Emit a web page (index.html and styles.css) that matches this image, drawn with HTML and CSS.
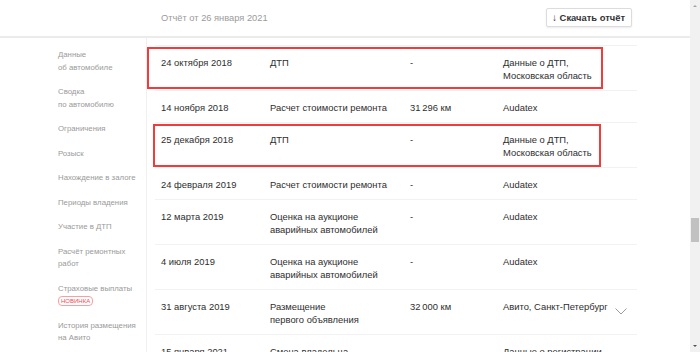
FILE: index.html
```html
<!DOCTYPE html>
<html lang="ru">
<head>
  <meta charset="UTF-8" />
  <title>Отчёт</title>
  <link rel="stylesheet" href="styles.css">
</head>
<body>
  <div class="page">
    <div class="header">
      <div class="report-date">Отчёт от 26 января 2021</div>
      <button class="download"><span class="arr">&#8595;</span> Скачать отчёт</button>
    </div>
    <div class="content">
      <div class="sidebar">
        <div class="nav-item">Данные<br />об автомобиле</div>
        <div class="nav-item">Сводка<br />по автомобилю</div>
        <div class="nav-item">Ограничения</div>
        <div class="nav-item">Розыск</div>
        <div class="nav-item">Нахождение в залоге</div>
        <div class="nav-item">Периоды владения</div>
        <div class="nav-item">Участие в ДТП</div>
        <div class="nav-item">Расчёт ремонтных<br />работ</div>
        <div class="nav-item">Страховые выплаты<br /><span class="badge">НОВИНКА</span></div>
        <div class="nav-item">История размещения<br />на Авито</div>
      </div>
      <div class="history">
        <div class="row">
          <div class="c-date">24 октября 2018</div>
          <div class="c-type">ДТП</div>
          <div class="c-km">-</div>
          <div class="c-src">Данные о ДТП,<br />Московская область</div>
          <div class="c-more"></div>
        </div>
        <div class="row">
          <div class="c-date">14 ноября 2018</div>
          <div class="c-type">Расчет стоимости ремонта</div>
          <div class="c-km">31&#8201;296 км</div>
          <div class="c-src">Audatex</div>
          <div class="c-more"></div>
        </div>
        <div class="row">
          <div class="c-date">25 декабря 2018</div>
          <div class="c-type">ДТП</div>
          <div class="c-km">-</div>
          <div class="c-src">Данные о ДТП,<br />Московская область</div>
          <div class="c-more"></div>
        </div>
        <div class="row">
          <div class="c-date">24 февраля 2019</div>
          <div class="c-type">Расчет стоимости ремонта</div>
          <div class="c-km">-</div>
          <div class="c-src">Audatex</div>
          <div class="c-more"></div>
        </div>
        <div class="row">
          <div class="c-date">12 марта 2019</div>
          <div class="c-type">Оценка на аукционе<br />аварийных автомобилей</div>
          <div class="c-km">-</div>
          <div class="c-src">Audatex</div>
          <div class="c-more"></div>
        </div>
        <div class="row">
          <div class="c-date">4 июля 2019</div>
          <div class="c-type">Оценка на аукционе<br />аварийных автомобилей</div>
          <div class="c-km">-</div>
          <div class="c-src">Audatex</div>
          <div class="c-more"></div>
        </div>
        <div class="row">
          <div class="c-date">31 августа 2019</div>
          <div class="c-type">Размещение<br />первого объявления</div>
          <div class="c-km">32&#8201;000 км</div>
          <div class="c-src">Авито, Санкт-Петербург</div>
          <div class="c-more">
            <svg width="12" height="7" viewBox="0 0 12 7"><path d="M0.5 0.5 L6 6 L11.5 0.5" fill="none" stroke="#9a9a9a" stroke-width="1"/></svg>
          </div>
        </div>
        <div class="row">
          <div class="c-date">15 января 2021</div>
          <div class="c-type">Смена владельца</div>
          <div class="c-km">-</div>
          <div class="c-src">Данные о регистрации</div>
          <div class="c-more"></div>
        </div>
        <div class="mark mark-1"></div>
        <div class="mark mark-2"></div>
      </div>
    </div>
  </div>
  <div class="scrollbar">
    <div class="arrow up"></div>
    <div class="thumb"></div>
    <div class="arrow down"></div>
  </div>
</body>
</html>
```

FILE: styles.css
```css
body {
  margin: 0;
  display: flex;
  height: 352px;
  overflow: hidden;
  background: #fff;
  color: #2e2e2e;
  font-family: 'Liberation Sans', Arial, sans-serif;
}
.page {
  flex: 1;
  overflow: hidden;
}
.header {
  height: 36px;
  border-bottom: 2px solid #ebebeb;
  display: flex;
  align-items: center;
  justify-content: space-between;
  padding: 0 58px 0 161px;
}
.report-date {
  color: #9b9b9b;
  font-size: 9.3px;
  margin-top: -1px;
}
.download {
  font-family: inherit;
  font-size: 9.4px;
  font-weight: bold;
  color: #333;
  background: #fff;
  border: 1px solid #dcdcdc;
  border-radius: 2px;
  box-shadow: 0 1px 2px rgba(0, 0, 0, 0.08);
  height: 19px;
  padding: 0 6px 0 5px;
  margin-top: -1px;
}
.arr {
  font-weight: normal;
  font-size: 10px;
}
.content {
  display: flex;
}
.sidebar {
  width: 88px;
  padding: 11px 0 0 58px;
  border-right: 1px solid #f0f0f0;
  height: 320px;
}
.nav-item {
  color: #9a9a9a;
  font-size: 7.8px;
  line-height: 12.5px;
  margin-bottom: 12px;
  white-space: nowrap;
}
.badge {
  display: inline-block;
  color: #f5474f;
  border: 1px solid #f7a0a4;
  border-radius: 4px;
  font-size: 6px;
  line-height: 8px;
  padding: 0 2px;
}
.history {
  position: relative;
  margin: 7px 0 0 8px;
  width: 482px;
  border-top: 1px solid #f2f2f2;
}
.row {
  display: flex;
  font-size: 9.4px;
  line-height: 13px;
  padding: 10px 0 8px 0;
  border-bottom: 1px solid #f2f2f2;
}
.c-date {
  width: 109px;
  padding-left: 6px;
}
.c-type {
  width: 140px;
}
.c-km {
  width: 93px;
}
.c-src {
  width: 111px;
  white-space: nowrap;
}
.c-more {
  flex: 1;
  display: flex;
  align-items: flex-start;
  padding: 8px 0 0 1px;
}
.mark {
  position: absolute;
  border: 2px solid #f23b3b;
}
.mark-1 {
  left: -8px;
  top: 1px;
  width: 452px;
  height: 38px;
}
.mark-2 {
  left: -2px;
  top: 78px;
  width: 444px;
  height: 39px;
}
.scrollbar {
  width: 10px;
  height: 352px;
  background: #f1f1f1;
  position: relative;
}
.thumb {
  position: absolute;
  left: 1px;
  top: 218px;
  width: 8px;
  height: 24px;
  background: #c1c1c1;
}
.arrow {
  position: absolute;
  left: 3px;
  width: 0;
  height: 0;
  border-left: 2px solid transparent;
  border-right: 2px solid transparent;
}
.arrow.up {
  top: 5px;
  border-bottom: 2px solid #a3a3a3;
}
.arrow.down {
  bottom: 5px;
  border-top: 2px solid #505050;
}
```
